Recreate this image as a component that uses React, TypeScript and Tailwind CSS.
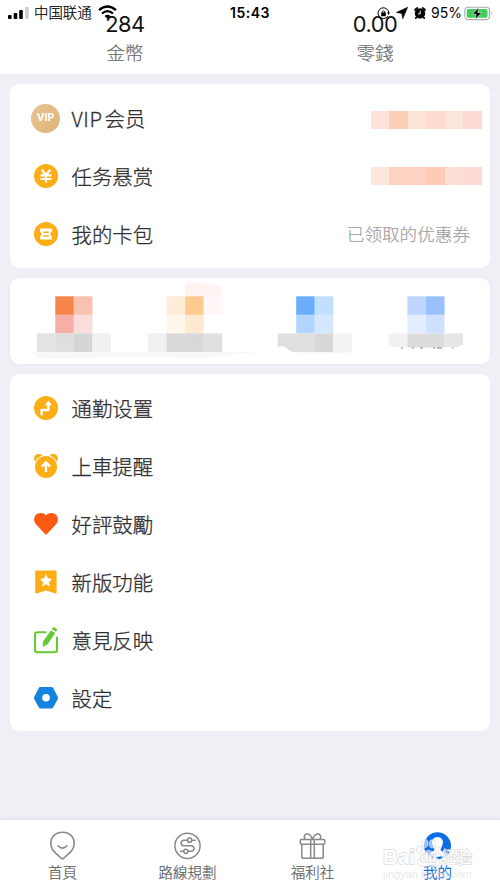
import type { ReactNode } from "react";

interface MenuRowProps {
  icon: ReactNode;
  label: ReactNode;
  children?: ReactNode;
}

interface Cell {
  x: number;
  y: number;
  fill: string;
}

const CELL = 18.55;

const vipCells = ["#fde3d8", "#fccfb7", "#fde4d9", "#fddccf", "#fde6de", "#fbdad3"];
const taskCells = ["#fbe7dd", "#fdd3c3", "#fdd2c2", "#fdcbb5", "#fcdfd6", "#fbdad3"];

const shortcutCells: Cell[] = [
  { x: 45.3, y: 18.3, fill: "#f58549" },
  { x: 63.9, y: 18.3, fill: "#f9c1b0" },
  { x: 45.3, y: 36.9, fill: "#f6aea7" },
  { x: 63.9, y: 36.9, fill: "#fbdddb" },
  { x: 26.8, y: 55.4, fill: "#e3e3e3" },
  { x: 45.3, y: 55.4, fill: "#dedede" },
  { x: 63.9, y: 55.4, fill: "#d5d5d5" },
  { x: 82.4, y: 55.4, fill: "#f1f1f1" },
  { x: 156.5, y: 18.3, fill: "#feecd8" },
  { x: 175.1, y: 18.3, fill: "#fdcb8e" },
  { x: 156.5, y: 36.9, fill: "#fff6ec" },
  { x: 175.1, y: 36.9, fill: "#fde9d0" },
  { x: 193.7, y: 36.9 - CELL, fill: "#fff8f6" },
  { x: 138, y: 55.4, fill: "#f1f1f1" },
  { x: 156.5, y: 55.4, fill: "#d9d9d9" },
  { x: 175.1, y: 55.4, fill: "#d8d8d8" },
  { x: 193.7, y: 55.4, fill: "#e0e0e0" },
  { x: 286.2, y: 18.3, fill: "#6aaefa" },
  { x: 304.8, y: 18.3, fill: "#c3dfff" },
  { x: 286.2, y: 36.9, fill: "#b1d5fe" },
  { x: 304.8, y: 36.9, fill: "#d5e7ff" },
  { x: 304.8, y: 55.4, fill: "#d7d7d7" },
  { x: 323.4, y: 55.4, fill: "#f3f3f3" },
  { x: 397.4, y: 18.3, fill: "#bed5fd" },
  { x: 416, y: 18.3, fill: "#98c0fd" },
  { x: 397.4, y: 36.9, fill: "#e2edff" },
  { x: 416, y: 36.9, fill: "#cfe0ff" },
];

function MosaicStrip({ colors }: { colors: string[] }) {
  return (
    <div className="flex h-[18.5px] w-[111.5px]">
      {colors.map((color, index) => (
        <div key={index} className="grow" style={{ backgroundColor: color }} />
      ))}
    </div>
  );
}

function ShortcutMosaic() {
  return (
    <svg className="block h-full w-full" viewBox="0 0 480 86">
      <path d="M22 74H253C222 75 208 81 178 80C120 77 80 80 43 81C30 81 24 78 22 74Z" fill="#f8f8f9" />
      <path d="M175 5Q198 4 212 9V19H175Z" fill="#fff4f2" />
      {shortcutCells.map((cell, index) => (
        <rect key={index} x={cell.x} y={cell.y} width={CELL} height={CELL} fill={cell.fill} />
      ))}
      <path d="M267.7 55.4H304.9V74H283Q278 72 276 69.5Q274 67.5 267.7 69Z" fill="#dfdfdf" />
      <path d="M284 74H349L331 75Q300 77 284 74Z" fill="#f8f8f8" />
      <path d="M378.8 55.4H397.5V69H378.8Z" fill="#f1f1f1" />
      <path d="M397.4 55.4H434.5V69.5H397.4Z" fill="#dcdcdc" />
      <path d="M434.5 55.4H453V67L447 69H434.5Z" fill="#e6e6e6" />
      <path d="M391 70h2M402 70h2M410 70h3M423 70h2M427 70h5M442 70h1.5" stroke="#888" strokeWidth="1" />
    </svg>
  );
}

function VipIcon() {
  return (
    <div className="flex h-[29px] w-[29px] items-center justify-center rounded-full bg-linear-to-br from-[#e9c58f] to-[#dfb27a] font-['Inter'] text-[10.4px] font-bold text-white">
      VIP
    </div>
  );
}

function YuanIcon() {
  return (
    <svg className="h-6 w-6" viewBox="0 0 24 24">
      <circle cx="12" cy="12" r="12" fill="#fdae17" />
      <path d="M7.7 5.8L12 11L16.3 5.8M12 11V18.6M6.5 11.3H17.5M6.5 15H17.5" fill="none" stroke="#fff" strokeWidth="2.2" />
    </svg>
  );
}

function TicketIcon() {
  return (
    <svg className="h-6 w-6" viewBox="0 0 24 24">
      <circle cx="12" cy="12" r="12" fill="#fdae17" />
      <path d="M6.8 6.5H17.2Q18 6.5 18 7.3V9.7Q16.4 10.1 16.4 12T18 14.3V16.7Q18 17.5 17.2 17.5H6.8Q6 17.5 6 16.7V14.3Q7.6 13.9 7.6 12T6 9.7V7.3Q6 6.5 6.8 6.5Z" fill="#fff" />
      <path d="M9.2 10.2H14.8M9.2 14H14.8" stroke="#fdae17" strokeWidth="1.5" />
    </svg>
  );
}

function RouteIcon() {
  return (
    <svg className="h-6 w-6" viewBox="0 0 24 24">
      <circle cx="12" cy="12" r="12" fill="#fdae17" />
      <path d="M7.6 19.3V13.9H14.4V8.3" fill="none" stroke="#fff" strokeWidth="2.5" strokeLinejoin="round" />
      <path d="M14.4 4.6L18 9.3H10.8Z" fill="#fff" />
    </svg>
  );
}

function AlarmIcon() {
  return (
    <svg className="h-6 w-6" viewBox="0 0 24 24">
      <circle cx="4.8" cy="4.6" r="4.8" fill="#fdae17" />
      <circle cx="19.2" cy="4.6" r="4.8" fill="#fdae17" />
      <circle cx="12" cy="13" r="11.9" fill="#fff" />
      <circle cx="12" cy="13" r="11" fill="#fdae17" />
      <path d="M12 18V8.8M7.8 12.7L12 8.5L16.2 12.7" fill="none" stroke="#fff" strokeWidth="2.4" />
    </svg>
  );
}

function HeartIcon() {
  return (
    <svg className="h-6 w-6" viewBox="0 0 24 24">
      <path d="M12 3.4C14.2.8 18.2.2 21 2.1C24.3 4.4 24.9 9 22.2 12L13.3 21.8Q12 23.2 10.7 21.8L1.8 12C-.9 9-.3 4.4 3 2.1C5.8.2 9.8.8 12 3.4Z" fill="#fd5910" />
    </svg>
  );
}

function BookmarkIcon() {
  return (
    <svg className="h-6 w-6" viewBox="0 0 24 24">
      <path d="M2.2.4H21.6Q22.6.4 22.6 1.4V22.4Q22.6 24 21.2 23.4L12 20.5L2.8 23.4Q1.2 24 1.2 22.4V1.4Q1.2.4 2.2.4Z" fill="#fdae17" />
      <path d="M12 4.2L13.9 8.3L18.1 8.9L15 12L15.8 16.4L12 14.3L8.2 16.4L9 12L5.9 8.9L10.1 8.3Z" fill="#fff" />
    </svg>
  );
}

function FeedbackIcon() {
  return (
    <svg className="h-[27px] w-6" viewBox="0 0 24 27">
      <path d="M11.5 5.3H3.3Q1 5.3 1 7.6V23Q1 25.2 3.3 25.2H20.7Q23 25.2 23 23V10.5" fill="none" stroke="#66c932" strokeWidth="2.1" strokeLinecap="round" />
      <path d="M16.8 3.4L21.2 6L13.6 17.2L8.7 20L9 14.5ZM17.6 2L18.6.8Q19.6-.2 20.8.6L22.4 1.7Q23.4 2.5 22.8 3.5L21.9 4.8Z" fill="#66c932" />
    </svg>
  );
}

function SettingsIcon() {
  return (
    <svg className="h-6 w-6" viewBox="0 0 24 24">
      <path d="M6.3 1H17.7Q18.6 1 19.1 1.8L23.7 10.8Q24.2 12 23.7 13.2L19.1 21.5Q18.6 22.6 17.7 22.6H6.3Q5.4 22.6 4.9 21.5L.3 13.2Q-.2 12 .3 10.8L4.9 1.8Q5.4 1 6.3 1Z" fill="#1283df" />
      <circle cx="12" cy="11.8" r="3.8" fill="#fff" />
    </svg>
  );
}

function MenuRow({ icon, label, children }: MenuRowProps) {
  return (
    <div className="flex h-[58px] items-center">
      <div className="flex w-[71px] shrink-0 items-center justify-center">{icon}</div>
      <span className="-ml-[9.5px] grow text-[20.4px] leading-none text-[#303030] [-webkit-text-stroke:0.3px_#303030]">
        {label}
      </span>
      {children}
    </div>
  );
}

function StatusBar() {
  return (
    <div className="absolute inset-x-0 top-0 flex h-[26px] items-center font-['Inter','Noto_Sans_CJK_SC',sans-serif] text-[13px] font-normal text-black">
      <svg className="ml-2 h-3 w-[22px]" viewBox="0 0 22 12">
        <rect x="0" y="8" width="3.6" height="4" rx="1" />
        <rect x="5.7" y="6" width="3.6" height="6" rx="1" />
        <rect x="11.2" y="3" width="3.6" height="9" rx="1" />
        <rect x="17" y="0" width="3.8" height="12" rx="1" fill="#d0d0d0" />
      </svg>
      <span className="ml-1 w-[64px] text-[14.4px] leading-none font-light whitespace-nowrap [-webkit-text-stroke:0.2px_#000]">中国联通</span>
      <svg className="-mt-0.5 h-[15px] w-[19px]" viewBox="0 0 19 15">
        <path d="M1 5.2Q9.5-2.3 18 5.2M4 8.5Q9.5 3.8 15 8.5" fill="none" stroke="#000" strokeWidth="2.3" />
        <path d="M6.5 11Q9.5 8.7 12.5 11L9.5 14Z" />
      </svg>
      <span className="ml-[113px] w-[42px] text-[14px] leading-none font-semibold tracking-[0.5px] whitespace-nowrap">15:43</span>
      <svg className="ml-[105px] h-[13px] w-[13px]" viewBox="0 0 13 13">
        <path d="M10.8 9.3A5.4 5.4 0 1 1 11.8 6" fill="none" stroke="#000" strokeWidth="1" />
        <path d="M10 5.5H13L11.6 7.8Z" />
        <rect x="4.2" y="5.6" width="4.6" height="3.6" rx=".5" />
        <path d="M5.2 6V4.6Q6.5 3 7.8 4.6V6" fill="none" stroke="#000" strokeWidth=".9" />
      </svg>
      <svg className="ml-[6px] h-3 w-3" viewBox="0 0 12 12">
        <path d="M11.6.3L6.8 11.7L5.8 6.5L.4 5.4Z" stroke="#000" strokeWidth=".6" />
      </svg>
      <svg className="ml-[6px] h-3 w-3" viewBox="0 0 12 12">
        <path d="M.2 3.2Q1.2.8 3.4.3L4.2 1.1L1 4ZM11.8 3.2Q10.8.8 8.6.3L7.8 1.1L11 4Z" stroke="#000" strokeWidth=".5" />
        <circle cx="6" cy="6.4" r="5.2" />
        <path d="M2.6 10L1.3 11.8M9.4 10L10.7 11.8" stroke="#000" strokeWidth="1.7" />
        <path d="M6.2 3.7V6.8L4 7" fill="none" stroke="#fff" strokeWidth="1" />
      </svg>
      <span className="ml-[5px] w-[32px] text-[14px] leading-none whitespace-nowrap">95%</span>
      <svg className="ml-px h-[15px] w-[29px]" viewBox="0 0 29 15">
        <rect x=".8" y="1.2" width="24.8" height="12.4" rx="3.5" fill="#fff" stroke="#aaa" strokeWidth="1.1" />
        <rect x="2.7" y="3" width="20.8" height="8.8" rx="1.8" fill="#3fce5b" />
        <path d="M27 5.5Q28.8 7.4 27 9.3Z" fill="#aaa" />
        <path d="M14.7 1.5L8.3 8.2H12.1L11.2 13.6L17.8 6.5H13.8Z" stroke="#fff" strokeWidth=".6" />
      </svg>
    </div>
  );
}

function Balance({ amount, label }: { amount: string; label: string }) {
  return (
    <div className="flex flex-1 flex-col items-center pt-[13px]">
      <span className="font-['Inter',sans-serif] text-[21.8px] leading-[23px] font-normal tracking-[-0.5px] text-[#111]">{amount}</span>
      <span className="mt-[6px] text-[18.5px] leading-5 text-[#6c6c6c] [-webkit-text-stroke:0.2px_#6c6c6c]">{label}</span>
    </div>
  );
}

function NavItem({ icon, label, active }: { icon: ReactNode; label: string; active?: boolean }) {
  return (
    <div className="flex flex-1 flex-col items-center pt-[11px]">
      {icon}
      <span
        className={
          active
            ? "mt-[3px] text-[14.5px] leading-[18px] text-[#0e68d8] [-webkit-text-stroke:0.3px_#0e68d8]"
            : "mt-[3px] text-[14.5px] leading-[18px] text-[#5c5c5c] [-webkit-text-stroke:0.2px_#5c5c5c]"
        }
      >
        {label}
      </span>
    </div>
  );
}

function BottomNav() {
  return (
    <nav className="relative flex h-[69px] bg-white shadow-[0_-1px_4px_#dddde4]">
      <NavItem
        label="首頁"
        icon={
          <svg className="h-[29px] w-[29px]" viewBox="0 0 29 29" fill="none" stroke="#898989" strokeWidth="1.6" strokeLinecap="round">
            <path d="M14.5 1.2C21.5 1.2 26.2 6 26.2 12.5C26.2 20.3 19.5 23 15.6 27.3Q14.5 28.3 13.4 27.3C9.5 23 2.8 20.3 2.8 12.5C2.8 6 7.5 1.2 14.5 1.2Z" />
            <path d="M10 14.8Q14.5 19.5 19 14.8" />
          </svg>
        }
      />
      <NavItem
        label="路線規劃"
        icon={
          <svg className="h-[29px] w-[29px]" viewBox="0 0 29 29" fill="none" stroke="#898989" strokeWidth="1.5" strokeLinecap="round">
            <circle cx="14.5" cy="14.8" r="12.6" />
            <path d="M22 9.2H18.7M14.5 9.2H11A2.8 2.8 0 0 0 11 14.8H18.2A2.7 2.7 0 0 1 18.2 20.3H15M10.7 20.3H7.5" />
            <circle cx="16.6" cy="9.2" r="2.1" />
            <circle cx="12.8" cy="20.3" r="2.1" />
          </svg>
        }
      />
      <NavItem
        label="福利社"
        icon={
          <svg className="h-[29px] w-[29px]" viewBox="0 0 29 29" fill="none" stroke="#898989" strokeWidth="1.5" strokeLinejoin="round">
            <rect x="2.3" y="8.5" width="24.4" height="4.8" rx="1" />
            <path d="M3.8 13.3V25.5Q3.8 27.3 5.6 27.3H23.4Q25.2 27.3 25.2 25.5V13.3M12.7 8.5V27.3M16.3 8.5V27.3M14.5 8.3C12.5 2.4 8.5 1.8 6.9 4Q5.5 6 7.1 8.3M14.5 8.3C16.5 2.4 20.5 1.8 22.1 4Q23.5 6 21.9 8.3" />
          </svg>
        }
      />
      <NavItem
        active
        label="我的"
        icon={
          <svg className="h-[29px] w-[29px]" viewBox="0 0 29 29">
            <circle cx="14.5" cy="14.7" r="13.5" fill="#0e6ee8" />
            <path d="M14.5 6C19 6 21 10 19.4 14C18.6 16.5 17.8 17 17.5 19.3Q21 20.4 22 23.2Q18.5 26 14.5 26T7 23.2Q8 20.4 11.5 19.3C11.2 17 10.4 16.5 9.6 14C8 10 10 6 14.5 6Z" fill="#fff" />
          </svg>
        }
      />
      <Watermark />
    </nav>
  );
}

function Watermark() {
  return (
    <div className="absolute top-[15px] left-[383px] h-[54px] w-[94px] font-['Liberation_Sans','Noto_Sans_CJK_SC',sans-serif] leading-none font-normal whitespace-nowrap">
      <svg className="absolute top-px left-[33px] h-[35px] w-[27px]" viewBox="0 0 30 35" fill="#f3f6fa" fillOpacity=".6" stroke="#dedede" strokeWidth=".8">
        <ellipse cx="4" cy="13" rx="3.4" ry="4.4" />
        <ellipse cx="10" cy="6.2" rx="3.4" ry="4.6" />
        <ellipse cx="18" cy="6.8" rx="3.3" ry="4.5" />
        <ellipse cx="24" cy="14" rx="3.3" ry="4.2" />
        <path d="M14 14C19 14 20 20 24 23C29 27 25 33 20 32C15 31 12 31 8 32C3 33-1 27 4 23C8 20 9 14 14 14Z" />
      </svg>
      <div className="absolute top-[12px] left-0 flex items-center text-white opacity-85 [paint-order:stroke_fill] [-webkit-text-stroke:1.4px_#d6d6d6]">
        <span className="w-[33px] text-[20.5px] font-bold">Bai</span>
        <span className="w-[25px] text-center text-[13px] font-bold">du</span>
        <span className="text-[15.5px] font-medium">经验</span>
      </div>
      <span className="absolute top-[34px] left-0 text-[11px] text-[#e4e4e4]/80">jingyan.baidu.com</span>
    </div>
  );
}

function App() {
  return (
    <div className="flex h-[889px] w-[500px] flex-col overflow-hidden bg-[#efeff5] font-['Noto_Sans_CJK_SC',sans-serif] font-light">
      <header className="relative flex h-[74px] shrink-0 bg-white">
        <Balance amount="284" label="金幣" />
        <Balance amount="0.00" label="零錢" />
        <StatusBar />
      </header>

      <main className="flex grow flex-col gap-[10px] px-[10px] pt-[10px]">
        <section className="h-[184px] rounded-[9px] bg-white pt-[5px]">
          <MenuRow
            icon={<VipIcon />}
            label={
              <>
                <span className="mr-0.5 tracking-[0.6px]">VIP</span>会员
              </>
            }
          >
            <div className="mr-2 pt-1">
              <MosaicStrip colors={vipCells} />
            </div>
          </MenuRow>
          <MenuRow icon={<YuanIcon />} label="任务悬赏">
            <div className="mr-2">
              <MosaicStrip colors={taskCells} />
            </div>
          </MenuRow>
          <MenuRow icon={<TicketIcon />} label="我的卡包">
            <span className="mr-5 text-[17.6px] leading-none text-[#a0a0a0] [-webkit-text-stroke:0.2px_#a0a0a0]">已领取的优惠券</span>
          </MenuRow>
        </section>

        <section className="h-[86px] rounded-[9px] bg-white shadow-[0_0_5px_#e6e6ed]">
          <ShortcutMosaic />
        </section>

        <section className="h-[357px] rounded-[9px] bg-white pt-[5px]">
          <MenuRow icon={<RouteIcon />} label="通勤设置" />
          <MenuRow icon={<AlarmIcon />} label="上車提醒" />
          <MenuRow icon={<HeartIcon />} label="好評鼓勵" />
          <MenuRow icon={<BookmarkIcon />} label="新版功能" />
          <MenuRow icon={<FeedbackIcon />} label="意見反映" />
          <MenuRow icon={<SettingsIcon />} label="設定" />
        </section>
      </main>

      <BottomNav />
    </div>
  );
}

export default App;
